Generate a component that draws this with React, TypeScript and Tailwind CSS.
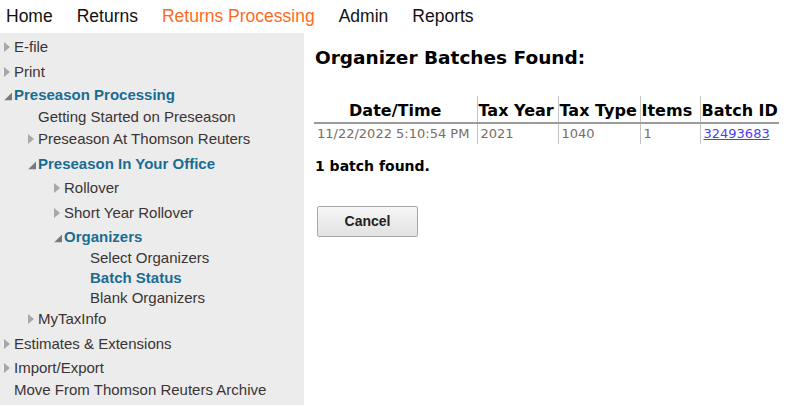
import { ReactNode } from "react";

type Node = {
  label: string;
  indent: number;
  arrow?: "closed" | "open";
  bold?: boolean;
  h: number;
};

const tree: Node[] = [
  { label: "E-file", indent: 0, arrow: "closed", h: 25 },
  { label: "Print", indent: 0, arrow: "closed", h: 23 },
  { label: "Preseason Processing", indent: 0, arrow: "open", bold: true, h: 22 },
  { label: "Getting Started on Preseason", indent: 1, h: 22 },
  { label: "Preseason At Thomson Reuters", indent: 1, arrow: "closed", h: 25 },
  { label: "Preseason In Your Office", indent: 1, arrow: "open", bold: true, h: 24 },
  { label: "Rollover", indent: 2, arrow: "closed", h: 25 },
  { label: "Short Year Rollover", indent: 2, arrow: "closed", h: 24 },
  { label: "Organizers", indent: 2, arrow: "open", bold: true, h: 21 },
  { label: "Select Organizers", indent: 3, h: 20 },
  { label: "Batch Status", indent: 3, bold: true, h: 20 },
  { label: "Blank Organizers", indent: 3, h: 21 },
  { label: "MyTaxInfo", indent: 1, arrow: "closed", h: 25 },
  { label: "Estimates & Extensions", indent: 0, arrow: "closed", h: 24 },
  { label: "Import/Export", indent: 0, arrow: "closed", h: 22 },
  { label: "Move From Thomson Reuters Archive", indent: 0, h: 22 },
];

// text start x for each indent level
const textLeft = [14, 38, 64, 90];

function Arrow({ kind }: { kind: "closed" | "open" }) {
  if (kind === "closed") {
    return (
      <svg width="6" height="10" viewBox="0 0 6 10" className="absolute -left-[10px] top-1/2 -translate-y-1/2">
        <path d="M0 0 L6 5 L0 10 Z" fill="#a8a8a8" />
      </svg>
    );
  }
  return (
    <svg width="8" height="8" viewBox="0 0 8 8" className="absolute -left-[10px] top-1/2 -translate-y-[30%]">
      <path d="M8 0 L8 8 L0 8 Z" fill="#7a7a7a" />
    </svg>
  );
}

function Row({ n }: { n: Node }) {
  return (
    <div className="flex items-start" style={{ height: n.h, paddingLeft: textLeft[n.indent] }}>
      <span
        className={
          "relative whitespace-nowrap text-[15px] leading-[17px] " +
          (n.bold ? "font-bold text-[#1b6c93]" : "text-[#3a3434]")
        }
      >
        {n.arrow && <Arrow kind={n.arrow} />}
        {n.label}
      </span>
    </div>
  );
}

function Th({ children, className = "" }: { children: ReactNode; className?: string }) {
  return (
    <th className={"font-bold text-[16px] leading-[18px] text-black px-[1px] pt-[6px] pb-[2px] border-b-2 border-b-[#9a9a9a] whitespace-nowrap " + className}>
      {children}
    </th>
  );
}

function Td({ children, className = "" }: { children: ReactNode; className?: string }) {
  return (
    <td className={"text-[13px] leading-[16px] text-[#7a6d64] px-[3px] py-[2px] text-left whitespace-nowrap " + className}>
      {children}
    </td>
  );
}

export default function App() {
  return (
    <div className="w-[786px] h-[405px] bg-white overflow-hidden font-['Liberation_Sans',Arial,sans-serif]">
      <div className="h-[33px] flex items-center pl-[6px] gap-[24px] text-[17.5px] text-[#111]">
        <span>Home</span>
        <span>Returns</span>
        <span className="text-[#ff6a22]">Returns Processing</span>
        <span>Admin</span>
        <span>Reports</span>
      </div>
      <div className="flex h-[372px]">
        <div className="w-[304px] bg-[#ececec] pt-[5px]">
          {tree.map((n) => (
            <Row key={n.label} n={n} />
          ))}
        </div>
        <div className="flex-1 pl-[10px] font-['DejaVu_Sans',Verdana,sans-serif]">
          <div className="mt-[11px] pl-[1px] text-[18.5px] font-bold text-black">Organizer Batches Found:</div>
          <table className="mt-[24px] border-collapse">
            <thead>
              <tr>
                <Th className="w-[163px] text-center border-r border-r-[#c4c4c4]">Date/Time</Th>
                <Th className="w-[81px] border-r border-r-[#c4c4c4] text-left">Tax Year</Th>
                <Th className="w-[82px] border-r border-r-[#c4c4c4] text-left">Tax Type</Th>
                <Th className="w-[60px] border-r border-r-[#c4c4c4] text-left">Items</Th>
                <Th className="w-[77px] text-left">Batch ID</Th>
              </tr>
            </thead>
            <tbody>
              <tr>
                <Td className="border-r border-r-[#c4c4c4]">11/22/2022 5:10:54 PM</Td>
                <Td className="border-r border-r-[#c4c4c4]">2021</Td>
                <Td className="border-r border-r-[#c4c4c4]">1040</Td>
                <Td className="border-r border-r-[#c4c4c4]">1</Td>
                <Td>
                  <a href="#" className="text-[#4b3ff0] underline">
                    32493683
                  </a>
                </Td>
              </tr>
            </tbody>
          </table>
          <div className="mt-[12px] pl-[1px] text-[14px] font-bold text-black">1 batch found.</div>
          <button className="mt-[29px] ml-[3px] w-[101px] h-[31px] border border-[#a9a9a9] rounded-[2px] bg-gradient-to-b from-[#f6f6f6] to-[#e2e2e2] font-['Liberation_Sans',Arial,sans-serif] font-bold text-[14px] text-[#222]">
            Cancel
          </button>
        </div>
      </div>
    </div>
  );
}
